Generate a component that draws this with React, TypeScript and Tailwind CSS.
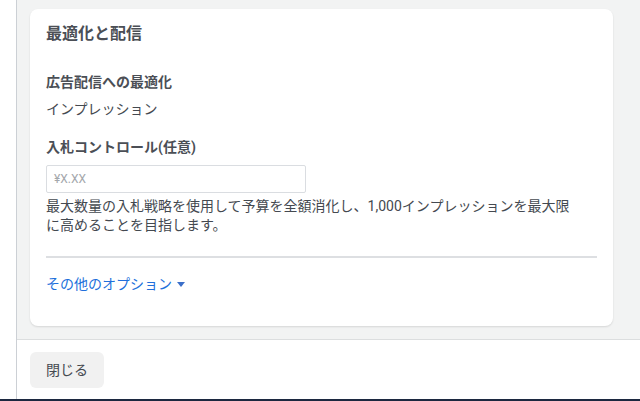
import React from "react";

export default function App() {
  return (
    <div
      className="w-[640px] h-[401px] bg-white flex overflow-hidden"
      style={{ fontFamily: 'Roboto, "Noto Sans CJK JP", sans-serif' }}
    >
      <div className="w-[16px] shrink-0 bg-white" />
      <div className="flex-1 flex flex-col border-l border-[#ccd0d5]">
        <div className="h-[340px] shrink-0 bg-[#f2f3f3] border-b border-[#dcdedf] pt-[9px] pl-[13px] pr-[27px]">
          <div className="bg-white rounded-[8px] shadow-[0_1px_2px_rgba(0,0,0,0.12)] px-[16px] pt-[15px] pb-[32px]">
            <div className="text-[16px] leading-[20px] font-bold text-[#4b4f56]">最適化と配信</div>
            <div className="mt-[28px] text-[14px] leading-[20px] font-bold text-[#4b4f56]">広告配信への最適化</div>
            <div className="mt-[7px] text-[14px] leading-[20px] text-[#444950]">インプレッション</div>
            <div className="mt-[18px] text-[14px] leading-[20px] font-bold text-[#4b4f56]">入札コントロール(任意)</div>
            <div className="mt-[8px] w-[260px] h-[28px] border border-[#dadde1] rounded-[2px] flex items-center px-[7px] text-[12px] text-[#a4a7ab]">
              ¥X.XX
            </div>
            <div className="mt-[4px] text-[14px] leading-[19px] text-[#444950]">
              最大数量の入札戦略を使用して予算を全額消化し、1,000インプレッションを最大限
              <br />
              に高めることを目指します。
            </div>
            <div className="mt-[21px] h-[2px] bg-[#dddfe2]" />
            <div className="mt-[16px] flex items-center gap-[5px] text-[14px] leading-[20px] text-[#216fdb]">
              <span>その他のオプション</span>
              <svg width="8" height="5" viewBox="0 0 8 5" className="mt-[1px]">
                <path d="M0 0 L8 0 L4 5 Z" fill="#3b6fc9" />
              </svg>
            </div>
          </div>
        </div>
        <div className="flex-1 bg-white pt-[12px] pl-[13px]">
          <button className="w-[74px] h-[36px] rounded-[6px] bg-[#f1f1f1] text-[14px] text-[#444950] flex items-center justify-center">
            閉じる
          </button>
        </div>
        <div className="h-[2px] shrink-0" />
      </div>
      <div className="absolute left-0 top-[399px] w-[640px] h-[2px] bg-[#1c2840]" />
    </div>
  );
}
